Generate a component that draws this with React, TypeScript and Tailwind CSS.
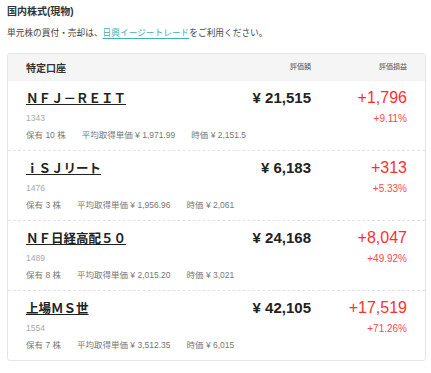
import React from 'react';

interface Holding {
  name: string;
  code: string;
  amount: string;
  gain: string;
  rate: string;
  qty: string;
  avg: string;
  price: string;
}

const HOLDINGS: Holding[] = [
  { name: 'ＮＦＪ－ＲＥＩＴ', code: '1343', amount: '¥ 21,515', gain: '+1,796', rate: '+9.11%', qty: '10', avg: '1,971.99', price: '2,151.5' },
  { name: 'ｉＳＪリート', code: '1476', amount: '¥ 6,183', gain: '+313', rate: '+5.33%', qty: '3', avg: '1,956.96', price: '2,061' },
  { name: 'ＮＦ日経高配５０', code: '1489', amount: '¥ 24,168', gain: '+8,047', rate: '+49.92%', qty: '8', avg: '2,015.20', price: '3,021' },
  { name: '上場ＭＳ世', code: '1554', amount: '¥ 42,105', gain: '+17,519', rate: '+71.26%', qty: '7', avg: '3,512.35', price: '6,015' },
];

const HoldingRow: React.FC<{ item: Holding; first: boolean }> = ({ item, first }) => (
  <div className={`px-[18px] pt-2 pb-[9px] ${first ? '' : 'border-t border-dashed border-[#e3e3e3]'}`}>
    <div className="flex items-center h-[18px]">
      <div className="flex-1">
        <a href="#" className="text-[12.5px] font-bold text-[#222] underline decoration-[1.4px] underline-offset-[1px] font-['Noto_Sans_CJK_JP',sans-serif]">
          {item.name}
        </a>
      </div>
      <span className="text-[15px] font-bold text-[#222] text-right">{item.amount}</span>
      <span className="w-[96px] text-right text-[16px] font-medium text-[#ff2e2e]">{item.gain}</span>
    </div>
    <div className="flex items-center h-3 mt-[5px]">
      <span className="flex-1 text-[8.5px] text-[#a8a8a8]">{item.code}</span>
      <span className="text-[10px] text-[#ff4747]">{item.rate}</span>
    </div>
    <div className="flex items-center gap-4 h-3 mt-[5px] text-[8.5px] text-[#777]">
      <span>保有 {item.qty} 株</span>
      <span>平均取得単価 ¥ {item.avg}</span>
      <span>時価 ¥ {item.price}</span>
    </div>
  </div>
);

export default function App() {
  return (
    <div className="w-[431px] h-[373px] bg-white pt-[5px] font-['Liberation_Sans','Noto_Sans_CJK_JP',sans-serif]">
      <h2 className="px-[7px] text-[10px] font-bold text-[#333] leading-[14px]">国内株式(現物)</h2>
      <p className="px-[7px] mt-[8px] text-[8.7px] text-[#444] leading-[12px]">
        単元株の買付・売却は、
        <a href="#" className="text-[#3fb0b6] underline underline-offset-2">日興イージートレード</a>
        をご利用ください。
      </p>
      <div className="ml-[7px] mr-[5px] mt-[14px] border border-[#e6e6e6] rounded-[3px] overflow-hidden">
        <div className="flex items-center h-[27px] bg-[#f5f5f5] px-[18px]">
          <span className="flex-1 text-[10px] font-bold text-[#333] mt-[2px]">特定口座</span>
          <span className="text-[7px] text-[#555]">評価額</span>
          <span className="w-[96px] text-right text-[7px] text-[#555]">評価損益</span>
        </div>
        {HOLDINGS.map((h, i) => (
          <HoldingRow key={h.code} item={h} first={i === 0} />
        ))}
      </div>
    </div>
  );
}
